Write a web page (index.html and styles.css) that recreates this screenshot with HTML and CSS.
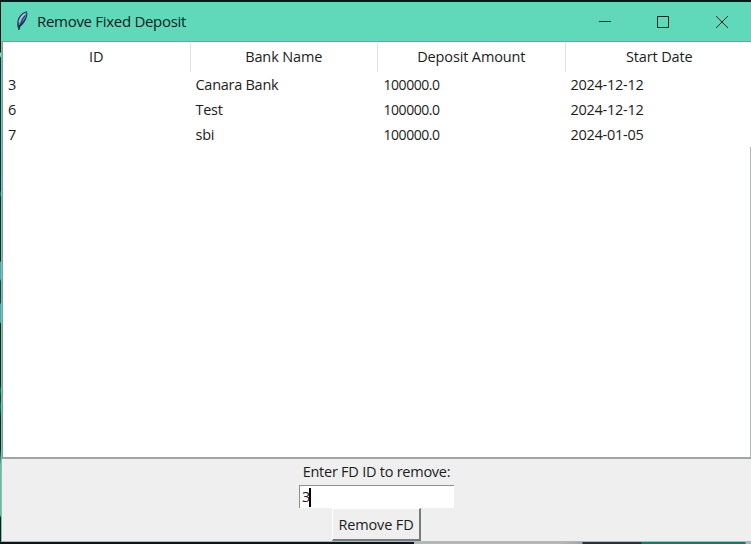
FILE: index.html
```html
<!DOCTYPE html>
<html lang="en">
<head>
<meta charset="utf-8">
<title>Remove Fixed Deposit</title>
<link rel="stylesheet" href="styles.css">
</head>
<body>
<div class="desktop">
<main class="window">
  <header class="titlebar">
    <svg class="feather" viewBox="0 0 16 22" aria-hidden="true">
      <path d="M12.8 1.2C8.4 2 4.2 6.5 3.4 11.2L3.2 15.8L4.8 20.2L6 16.8C10.2 14 13.2 8.6 13.4 3.4Z" fill="#1d3a58"/>
      <path d="M12 2.2C8.2 4 5 8 4.4 11.6L5 15.2C9 12.2 12 7.6 12.4 3.4Z" fill="#6a94cc"/>
      <path d="M10.6 4C8 6 6 9 5.4 12" stroke="#b4cfe9" stroke-width="1.1" fill="none"/>
      <path d="M11 5.4C8.4 9.5 6.2 14 4.9 20" stroke="#17202b" stroke-width=".9" fill="none"/>
    </svg>
    <h1 class="title">Remove Fixed Deposit</h1>
    <svg class="controls" viewBox="0 0 151 39" aria-hidden="true">
      <path d="M-1 19.5H11M57.5 14.5H68.5V25.5H57.5ZM116 14L128 26M128 14L116 26" fill="none" stroke="#10251f" stroke-width="1"/>
    </svg>
  </header>
  <section class="tree">
    <div class="row head"><span>ID</span><span>Bank Name</span><span>Deposit Amount</span><span>Start Date</span></div>
    <div class="row"><span>3</span><span>Canara Bank</span><span class="num">100000.0</span><span>2024-12-12</span></div>
    <div class="row"><span>6</span><span>Test</span><span class="num">100000.0</span><span>2024-12-12</span></div>
    <div class="row"><span>7</span><span>sbi</span><span class="num">100000.0</span><span>2024-01-05</span></div>
    <div class="empty"></div>
  </section>
  <form class="form">
    <label class="label">Enter FD ID to remove:</label>
    <div class="entry"><span>3</span><i class="caret"></i></div>
    <button class="button" type="button">Remove FD</button>
  </form>
</main>
</div>
</body>
</html>
```

FILE: styles.css
```css
* { box-sizing: border-box; }
body {
  margin: 0;
  font: 14.5px "Open Sans", "Noto Sans", sans-serif;
  color: #1c1c1c;
}
.desktop {
  width: 751px;
  height: 544px;
  padding: 2px 0 2px 1px;
  overflow: hidden;
  background:
    linear-gradient(90deg, #08171a 414px, #b5b8b6 414px 560px, #a3a6a5 582px, #24323f 583px 641px, #197968 642px 745px, #a7b8b1 746px) 0 542px / 751px 2px no-repeat,
    linear-gradient(#07161a 52px, #8bd5c4 53px 56px, #06333a 58px 190px, #168168 194px, #072b2c 198px 261px, #45a6b5 262px 279px, #153e45 281px 303px, #45a6b5 304px 322px, #07231f 324px 385px, #16765c 390px, #083628 398px, #16765c 406px, #07231f 418px 448px, #78b3a2 465px 515px, #06191a 518px) 0 0 / 1px 542px no-repeat,
    #0b1416;
}
.window {
  display: flex;
  flex-direction: column;
  height: 540px;
  background: #efefef;
  border-left: 1px solid #72c9b4;
  border-bottom: 1px solid #79d2bd;
}
.titlebar {
  display: flex;
  align-items: center;
  flex: 0 0 39px;
  margin-left: -1px;
  padding-left: 13px;
  background: #5fd9ba;
}
.feather { width: 16px; height: 22px; margin-top: -1px; }
.title {
  margin: -2px auto 0 7px;
  font-size: 15px;
  font-weight: 400;
  letter-spacing: -.3px;
  color: #0b231c;
  white-space: nowrap;
}
.controls { width: 151px; height: 39px; overflow: visible; }
.tree {
  display: flex;
  flex-direction: column;
  flex: 0 0 418px;
  background: #fff;
  border: 1px solid #8b9696;
  border-right: 0;
  border-bottom: 2px solid #a2a4a6;
}
.row {
  display: grid;
  grid-template-columns: repeat(4, 187.5px);
  flex: 0 0 25px;
  line-height: 25px;
  letter-spacing: -.27px;
  white-space: nowrap;
}
.row span { padding-left: 5px; }
.row .num { padding-left: 5.5px; font-size: 14px; letter-spacing: -.45px; }
.head { flex-basis: 30px; line-height: 30px; text-align: center; letter-spacing: -.13px; }
.row.head span { padding: 0; border-right: 1px solid #e3e3e3; }
.row.head span:last-child { border: 0; }
.empty { flex: 1; border-right: 1px solid #b5b8b8; }
.form {
  display: flex;
  flex-direction: column;
  align-items: center;
  flex: 1;
}
.label { height: 26px; line-height: 26px; letter-spacing: -.25px; }
.entry {
  display: flex;
  align-items: center;
  width: 155px;
  height: 23px;
  padding-left: 2px;
  background: #fff;
  border-top: 1px solid #8f8f8f;
  border-left: 1px solid #8f8f8f;
}
.entry span { margin-top: -2px; }
.caret { width: 2px; height: 19px; margin-left: -1px; background: #000; }
.button {
  width: 89px;
  height: 33px;
  padding: 0;
  font: inherit;
  letter-spacing: -.15px;
  color: inherit;
  background: #efefef;
  border: 1px solid #fff;
  border-right: 2px solid #777b7b;
  border-bottom: 2px solid #777b7b;
}
```
